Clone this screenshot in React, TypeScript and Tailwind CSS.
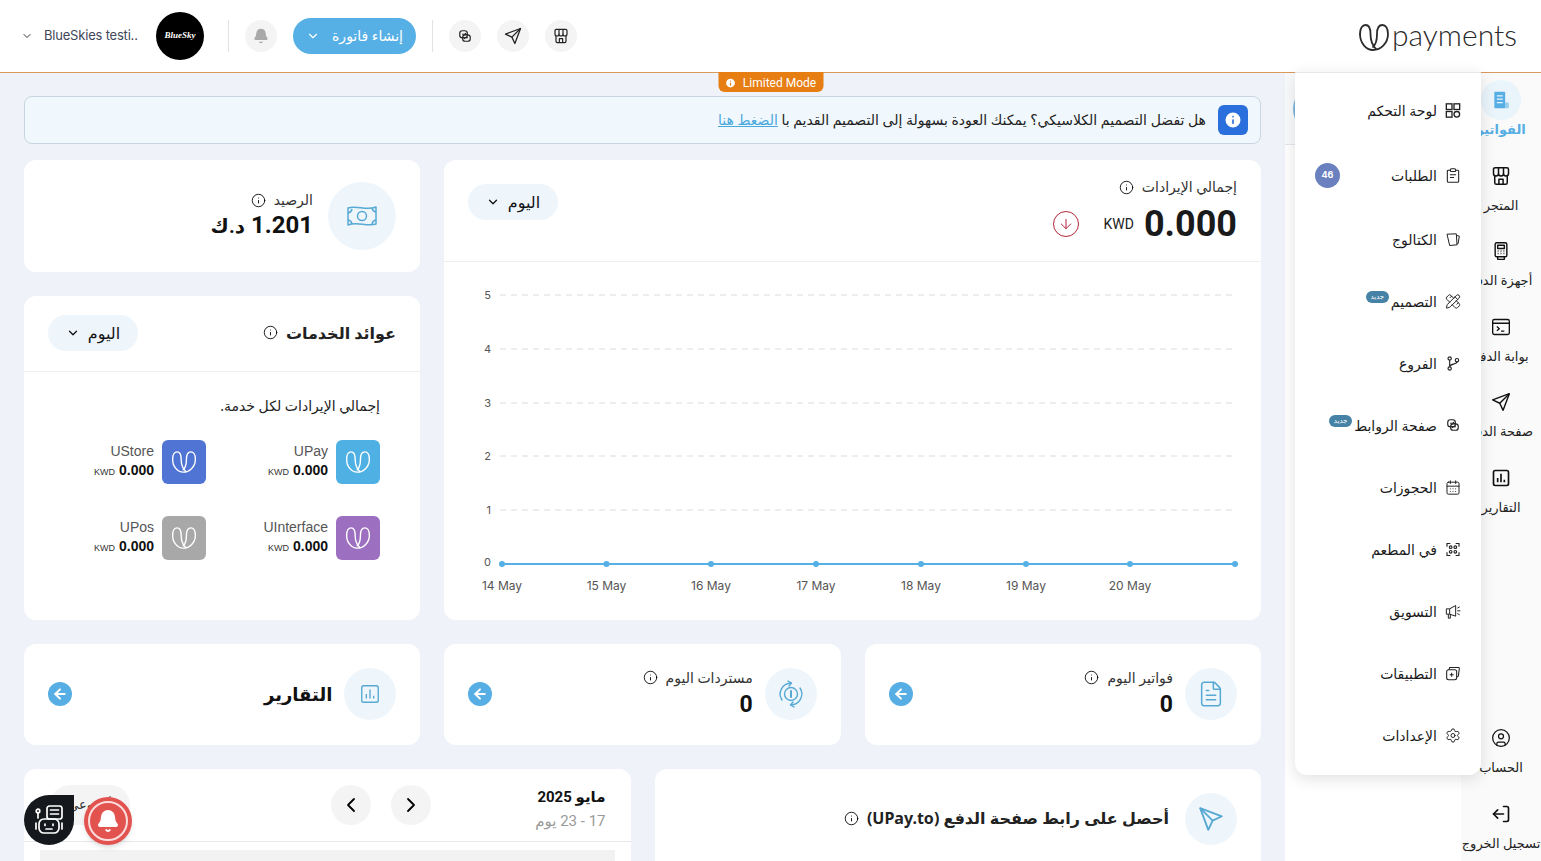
import { ReactNode } from 'react';
import {
  ArrowDown,
  ArrowLeft,
  Bell,
  CalendarDays,
  ChevronDown,
  ChevronLeft,
  ChevronRight,
  CircleUser,
  FileText,
  Info,
  LogOut,
  PencilRuler,
  Settings,
} from 'lucide-react';

function UMark({ className = '', width = 1.6 }: { className?: string; width?: number }) {
  return (
    <svg viewBox="0 0 32 29" fill="none" stroke="currentColor" strokeWidth={width} strokeLinecap="round" className={className}>
      <path d="M2 11C2 5 4.500 2 7.500 2C10.500 2 12.500 5 12.500 11C12.500 16 14 22 18 26" />
      <path d="M2 11C2 20 8 27 15 27C23 27 30 20 30 11C30 5 27.500 2 24.500 2C21 2 19 5 19 11C19 16 18.500 21 15 24" />
    </svg>
  );
}

function Plane({ className = '' }: { className?: string }) {
  return (
    <svg viewBox="0 0 24 24" fill="none" stroke="currentColor" strokeWidth={1.7} strokeLinejoin="round" className={className}>
      <path d="M2 9.500 22 2 14.500 22 10.500 13.500Z" />
      <path d="M22 2 10.500 13.500" />
    </svg>
  );
}

function StoreFront({ className = '' }: { className?: string }) {
  return (
    <svg viewBox="0 0 24 24" fill="none" stroke="currentColor" strokeWidth={1.800} strokeLinejoin="round" className={className}>
      <path d="M3 9V4a2 2 0 0 1 2-2h14a2 2 0 0 1 2 2v5a3 3 0 0 1-6 0 3 3 0 0 1-6 0 3 3 0 0 1-6 0Z" />
      <path d="M9 2v7M15 2v7" />
      <path d="M4.500 12v8a2 2 0 0 0 2 2h11a2 2 0 0 0 2-2v-8" />
      <path d="M9.500 22v-6h5v6" />
    </svg>
  );
}

function LinkSwap({ className = '' }: { className?: string }) {
  return (
    <svg viewBox="0 0 24 24" fill="none" stroke="currentColor" strokeWidth={2} className={className}>
      <rect x="3" y="3" width="13" height="12" rx="4.500" />
      <rect x="8" y="10" width="13" height="11" rx="4.500" />
      <path d="M7 9h7l-2-2M17 15h-7l2 2" strokeWidth={1.800} />
    </svg>
  );
}

function DashIcon({ className = '' }: { className?: string }) {
  return (
    <svg viewBox="0 0 24 24" fill="none" stroke="currentColor" strokeWidth={2} className={className}>
      <rect x="2" y="2" width="8.500" height="8.500" />
      <rect x="13.500" y="2" width="8.500" height="8.500" />
      <rect x="2" y="13.500" width="8.500" height="8.500" />
      <circle cx="17.750" cy="17.750" r="4.200" />
    </svg>
  );
}

function ReportIcon({ className = '', width = 2 }: { className?: string; width?: number }) {
  return (
    <svg viewBox="0 0 24 24" fill="none" stroke="currentColor" strokeWidth={width} className={className}>
      <rect x="3" y="3" width="18" height="18" rx="2" />
      <path d="M8 17v-5M12 17V7M16 17v-3" />
    </svg>
  );
}

function OrderIcon({ className = '' }: { className?: string }) {
  return (
    <svg viewBox="0 0 24 24" fill="none" stroke="currentColor" strokeWidth={1.600} strokeLinecap="round" className={className}>
      <path d="M8 4H5a1.500 1.500 0 0 0-1.500 1.500v15A1.500 1.500 0 0 0 5 22h14a1.500 1.500 0 0 0 1.500-1.500v-15A1.500 1.500 0 0 0 19 4h-3" />
      <rect x="8" y="2" width="8" height="4" rx="1.500" />
      <path d="M8 11h8M8 15h5" />
    </svg>
  );
}

function CatalogIcon({ className = '' }: { className?: string }) {
  return (
    <svg viewBox="0 0 24 24" fill="none" stroke="currentColor" strokeWidth={1.500} strokeLinejoin="round" className={className}>
      <path d="M3 4 17 3.500 18 20 7 21Z" />
      <path d="M18 6l3.500 1-2 11.500L18 18.500" />
    </svg>
  );
}

function BranchIcon({ className = '' }: { className?: string }) {
  return (
    <svg viewBox="0 0 24 24" fill="none" stroke="currentColor" strokeWidth={1.700} className={className}>
      <circle cx="7" cy="4.500" r="2.500" />
      <circle cx="7" cy="19.500" r="2.500" />
      <circle cx="18" cy="7" r="2.500" />
      <path d="M7 7v10M18 9.500C18 14 7 12 7 17" />
    </svg>
  );
}

function ScanIcon({ className = '' }: { className?: string }) {
  return (
    <svg viewBox="0 0 24 24" fill="none" stroke="currentColor" strokeWidth={1.700} className={className}>
      <path d="M3 8V3h5M16 3h5v5M21 16v5h-5M8 21H3v-5" />
      <circle cx="8.500" cy="8.500" r="2" />
      <circle cx="15.500" cy="8.500" r="2" />
      <circle cx="8.500" cy="15.500" r="2" />
      <circle cx="15.500" cy="15.500" r="2" />
    </svg>
  );
}

function HornIcon({ className = '' }: { className?: string }) {
  return (
    <svg viewBox="0 0 24 24" fill="none" stroke="currentColor" strokeWidth={1.500} strokeLinejoin="round" className={className}>
      <path d="M2 8h5l9-5v16l-9-3H2Z" />
      <path d="M7 8v8M5 16v6h3v-5.500" />
      <path d="M18.500 7 22 5M18.500 11H23M18.500 15l3.500 2" />
    </svg>
  );
}

function AppsIcon({ className = '' }: { className?: string }) {
  return (
    <svg viewBox="0 0 24 24" fill="none" stroke="currentColor" strokeWidth={1.600} strokeLinejoin="round" className={className}>
      <rect x="2.500" y="6.500" width="15" height="15" rx="3" />
      <path d="M6 6.500 7 3h13.500a1.500 1.500 0 0 1 1 1.500L20 16l-2.500 1.500" />
      <path d="M10 11v6M7 14h6" />
    </svg>
  );
}

function PosIcon({ className = '' }: { className?: string }) {
  return (
    <svg viewBox="0 0 24 24" fill="none" stroke="currentColor" strokeWidth={1.700} strokeLinejoin="round" className={className}>
      <rect x="5" y="2" width="14" height="17" rx="2" />
      <rect x="8" y="5" width="8" height="4" />
      <path d="M8 12h1M11.500 12h1M15 12h1M8 15h1M11.500 15h1M15 15h1" />
      <path d="M8 19v3h8v-3" />
    </svg>
  );
}

function GatewayIcon({ className = '' }: { className?: string }) {
  return (
    <svg viewBox="0 0 24 24" fill="none" stroke="currentColor" strokeWidth={1.600} strokeLinejoin="round" className={className}>
      <rect x="2" y="3" width="20" height="18" rx="2" />
      <path d="M2 7.500h20M7 11.500l3 2.500-3 2.500M12 17h4" />
    </svg>
  );
}

function InvoiceIcon({ className = '' }: { className?: string }) {
  return (
    <svg viewBox="0 0 24 24" fill="currentColor" className={className}>
      <path d="M4 3a1 1 0 0 1 1-1h11a1 1 0 0 1 1 1v18a1 1 0 0 1-1 1H5a1 1 0 0 1-1-1Z" />
      <path d="M17 15h3a1.500 1.500 0 0 1 1.500 1.500v3.500a2 2 0 0 1-2 2H17Z" opacity=".55" />
      <path d="M7 7h7M7 11h7M7 15h7" stroke="#eaf4fb" strokeWidth="1.500" />
    </svg>
  );
}

function MoneyIcon({ className = '' }: { className?: string }) {
  return (
    <svg viewBox="0 0 32 24" fill="none" stroke="currentColor" strokeWidth={1.500} strokeLinejoin="round" className={className}>
      <path d="M2 4C11 1 20 7 30 3V20C21 23 11 17 2 21Z" />
      <circle cx="16" cy="12" r="4.500" />
      <path d="M2 9a5 5 0 0 0 4-4M26 4a5 5 0 0 0 4 4M2 16a5 5 0 0 1 4 4M26 20a5 5 0 0 1 4-4" />
    </svg>
  );
}

function RefundIcon({ className = '' }: { className?: string }) {
  return (
    <svg viewBox="0 0 28 28" fill="none" stroke="currentColor" strokeWidth={1.400} strokeLinecap="round" strokeLinejoin="round" className={className}>
      <path d="M5 20A11 11 0 0 1 14 3" />
      <path d="M23 8A11 11 0 0 1 14 25" />
      <path d="M11 1l3.500 2L12 6M17 27l-3.500-2 2.500-3" />
      <circle cx="14" cy="14" r="6.500" />
      <path d="M14 11v6" strokeWidth={2} />
    </svg>
  );
}

function RobotIcon({ className = '' }: { className?: string }) {
  return (
    <svg viewBox="0 0 32 32" fill="none" stroke="currentColor" strokeWidth={1.700} strokeLinejoin="round" strokeLinecap="round" className={className}>
      <rect x="14" y="2" width="15" height="13" rx="2.500" />
      <path d="M17.500 6h8M17.500 10h8" />
      <rect x="6" y="15" width="20" height="14" rx="5" />
      <path d="M3 19v6M29 19v6M5 14V9" />
      <circle cx="5" cy="7" r="1.800" />
      <path d="M12 20v1.500M20 20v1.500M13 25h6" />
    </svg>
  );
}

function InfoDot({ size = 'w-[15px] h-[15px]' }: { size?: string }) {
  return <Info className={`${size} text-black shrink-0`} strokeWidth={1.400} />;
}

function Card({ children, className = '' }: { children: ReactNode; className?: string }) {
  return <div className={`bg-white rounded-xl ${className}`}>{children}</div>;
}

function DayButton() {
  return (
    <div className="w-[90px] h-9 rounded-full bg-[#eef6fc] flex items-center justify-center gap-2 text-[16px] text-[#111]">
      <span>اليوم</span>
      <ChevronDown className="w-3.5 h-3.5" strokeWidth={2.200} />
    </div>
  );
}

function IconCircle({ children, size = 'w-[52px] h-[52px]' }: { children: ReactNode; size?: string }) {
  return <div className={`${size} rounded-full bg-[#eef6fc] text-[#57a9d4] flex items-center justify-center shrink-0`}>{children}</div>;
}

function RoundButton({ children }: { children: ReactNode }) {
  return <div className="w-8 h-8 rounded-full bg-[#f4f4f4] flex items-center justify-center text-[#222] shrink-0">{children}</div>;
}

function GoArrow() {
  return (
    <div className="w-6 h-6 rounded-full bg-[#56aee4] flex items-center justify-center text-white shrink-0">
      <ArrowLeft className="w-4 h-4" strokeWidth={3} />
    </div>
  );
}

function Header() {
  return (
    <header className="h-[73px] shrink-0 bg-white border-b border-[#d99a5b] flex items-center justify-between pr-[24px] pl-[20px]">
      <div className="flex items-center gap-0.5 text-[#2b2b2b]" dir="ltr">
        <UMark className="w-[32px] h-[29px] mt-[3px]" width={1.800} />
        <span className="text-[30px] font-light leading-none font-['Lato',sans-serif] -mt-1">payments</span>
      </div>
      <div className="flex items-center">
        <RoundButton><StoreFront className="w-4 h-4" /></RoundButton>
        <div className="w-4" />
        <RoundButton><Plane className="w-[18px] h-[18px]" /></RoundButton>
        <div className="w-4" />
        <RoundButton><LinkSwap className="w-3.5 h-3.5" /></RoundButton>
        <div className="w-px h-8 bg-[#e3e3e3] mr-4 ml-4" />
        <div className="w-[123px] h-9 rounded-full bg-[#56b0e6] text-white flex items-center justify-center gap-3 text-sm">
          <span>إنشاء فاتورة</span>
          <ChevronDown className="w-3.5 h-3.5" strokeWidth={2} />
        </div>
        <div className="w-4" />
        <RoundButton><Bell className="w-4 h-4 text-[#a9a9a9]" fill="currentColor" /></RoundButton>
        <div className="w-px h-8 bg-[#e3e3e3] mr-4 ml-6" />
        <div className="w-12 h-12 rounded-full bg-black flex items-center justify-center text-white text-[9px] font-bold italic font-['Liberation_Serif',serif]" dir="ltr">BlueSky</div>
        <div className="w-[15px]" />
        <span className="w-[97px] text-[13px] tracking-[-0.2px] text-[#3f4758] font-['Inter',sans-serif] whitespace-nowrap" dir="ltr">BlueSkies testi..</span>
        <ChevronDown className="w-3 h-3 mr-[11px] ml-[1px] text-[#333]" strokeWidth={2} />
      </div>
    </header>
  );
}

const railTop = [
  { label: 'الفواتير', icon: <InvoiceIcon className="w-5 h-5" />, active: true },
  { label: 'المتجر', icon: <StoreFront className="w-5 h-5" /> },
  { label: 'أجهزة الدفع', icon: <PosIcon className="w-5 h-5" /> },
  { label: 'بوابة الدفع', icon: <GatewayIcon className="w-5 h-5" /> },
  { label: 'صفحة الدفع', icon: <Plane className="w-5 h-5" /> },
  { label: 'التقارير', icon: <ReportIcon className="w-5 h-5" /> },
];

function RailItem({ label, icon, active }: { label: string; icon: ReactNode; active?: boolean }) {
  return (
    <div className="h-[75.500px] flex flex-col items-center justify-start">
      <div className={`w-10 h-10 rounded-full flex items-center justify-center ${active ? 'bg-[#eaf4fb] text-[#56aee4]' : 'text-[#111]'}`}>{icon}</div>
      <span className={`text-[13px] whitespace-nowrap ${active ? 'text-[#56aee4] font-bold' : 'text-[#222]'}`}>{label}</span>
    </div>
  );
}

function Sidebar() {
  return (
    <aside className="w-[256px] shrink-0 bg-white flex h-full">
      <div className="w-[80px] shrink-0 bg-[#fafafa] pt-[7px] flex flex-col justify-between items-center">
        <div className="flex flex-col">
          {railTop.map((item) => (
            <RailItem key={item.label} {...item} />
          ))}
        </div>
        <div className="flex flex-col -mb-[8px]">
          <RailItem label="الحساب" icon={<CircleUser className="w-5 h-5" strokeWidth={1.500} />} />
          <RailItem label="تسجيل الخروج" icon={<LogOut className="w-5 h-5 -scale-x-100" strokeWidth={2} />} />
        </div>
      </div>
      <div className="flex-1 relative">
        <div className="h-[72px] border-b border-[#e4e8ee] bg-[#f8fafc]" />
        <div className="w-[50px] h-[50px] rounded-full bg-[#79b6da] absolute left-[8px] top-[11px]" />
      </div>
    </aside>
  );
}

type MenuRow = { label: string; icon: ReactNode; badge?: string; tag?: boolean; gap?: string };

const menu: MenuRow[] = [
  { label: 'لوحة التحكم', icon: <DashIcon className="w-[17px] h-[17px]" /> },
  { label: 'الطلبات', icon: <OrderIcon className="w-[19px] h-[19px]" />, badge: '46', gap: 'mt-[3px]' },
  { label: 'الكتالوج', icon: <CatalogIcon className="w-[19px] h-[19px]" />, gap: 'mt-[2px]' },
  { label: 'التصميم', icon: <PencilRuler className="w-[17px] h-[17px]" strokeWidth={1.500} />, tag: true },
  { label: 'الفروع', icon: <BranchIcon className="w-[17px] h-[17px]" /> },
  { label: 'صفحة الروابط', icon: <LinkSwap className="w-3.5 h-3.5" />, tag: true },
  { label: 'الحجوزات', icon: <CalendarDays className="w-[17px] h-[17px]" strokeWidth={1.500} /> },
  { label: 'في المطعم', icon: <ScanIcon className="w-[17px] h-[17px]" /> },
  { label: 'التسويق', icon: <HornIcon className="w-[17px] h-[17px]" /> },
  { label: 'التطبيقات', icon: <AppsIcon className="w-[17px] h-[17px]" /> },
  { label: 'الإعدادات', icon: <Settings className="w-[17px] h-[17px]" strokeWidth={1.500} /> },
];

function FlyoutMenu() {
  return (
    <div className="absolute top-[72px] right-[60px] w-[186px] h-[703px] bg-white rounded-b-xl shadow-[0_4px_16px_rgba(0,0,0,0.12)] border-t border-[#e6e6e6] pt-[6px] pr-[20px] pl-[20px]">
      {menu.map((row) => (
        <div key={row.label} className={`h-[62px] flex items-center gap-2 text-[14px] text-[#1a1a1a] ${row.gap ?? ''}`}>
          <span className="w-4 flex justify-center shrink-0 text-[#222]">{row.icon}</span>
          <span className="whitespace-nowrap">{row.label}</span>
          {row.tag && <span className="w-[23px] h-[12px] rounded-full bg-[#4582a6] text-white text-[7px] leading-[12px] text-center -mt-2 -mr-1.5 shrink-0">جديد</span>}
          {row.badge && <span className="mr-auto w-[25px] h-[25px] rounded-full bg-[#6a80bf] text-white text-[9px] font-bold flex items-center justify-center font-['Inter',sans-serif]">{row.badge}</span>}
        </div>
      ))}
    </div>
  );
}

function RevenueChart() {
  const ys = [
    { y: 33, v: '5' },
    { y: 87, v: '4' },
    { y: 141, v: '3' },
    { y: 194, v: '2' },
    { y: 248, v: '1' },
  ];
  const xs = [58, 162.500, 267, 372, 477, 582, 686, 791];
  const days = ['14 May', '15 May', '16 May', '17 May', '18 May', '19 May', '20 May'];
  return (
    <div dir="ltr">
      <svg viewBox="0 0 817 358" className="w-full h-[358px] font-['Inter',sans-serif]">
        {ys.map((g) => (
          <g key={g.v}>
            <line x1="56" x2="792" y1={g.y} y2={g.y} stroke="#dcdcdc" strokeDasharray="6 5" />
            <text x="47" y={g.y + 4} textAnchor="end" fontSize="11" fill="#555">{g.v}</text>
          </g>
        ))}
        <text x="47" y="304" textAnchor="end" fontSize="11" fill="#555">0</text>
        <line x1="58" x2="791" y1="302" y2="302" stroke="#56b0e6" strokeWidth="2" />
        {xs.map((x) => (
          <circle key={x} cx={x} cy="302" r="3" fill="#56b0e6" />
        ))}
        {days.map((d, i) => (
          <text key={d} x={xs[i]} y="328" textAnchor="middle" fontSize="12" fill="#555">{d}</text>
        ))}
      </svg>
    </div>
  );
}

const services = [
  { name: 'UPay', tile: 'bg-[#4fb1e3]' },
  { name: 'UStore', tile: 'bg-[#4f74d4]' },
  { name: 'UInterface', tile: 'bg-[#9c6fc0]' },
  { name: 'UPos', tile: 'bg-[#a8a8a8]' },
];

function ServiceCard() {
  return (
    <Card className="flex-1">
      <div className="h-[76px] pb-[2px] border-b border-[#eceef1] flex items-center justify-between px-6">
        <div className="flex items-center gap-2">
          <span className="text-[16px] font-bold text-[#222]">عوائد الخدمات</span>
          <InfoDot />
        </div>
        <DayButton />
      </div>
      <div className="pt-[24px] pr-10">
        <p className="text-[14px] text-[#222] leading-5">إجمالي الإيرادات لكل خدمة.</p>
        <div className="grid grid-cols-[174px_174px] gap-y-8 mt-6">
          {services.map((s) => (
            <div key={s.name} className="flex items-center gap-2">
              <div className={`${s.tile} w-11 h-11 rounded-md text-white flex items-center justify-center shrink-0`}>
                <UMark className="w-[26px] h-[24px]" width={1.700} />
              </div>
              <div className="font-['Liberation_Sans',sans-serif]">
                <div className="text-[14px] text-[#555] leading-[18px]">{s.name}</div>
                <div className="flex items-baseline gap-1 leading-5">
                  <span className="text-[14px] font-bold text-[#111]">0.000</span>
                  <span className="text-[9px] text-[#333]">KWD</span>
                </div>
              </div>
            </div>
          ))}
        </div>
      </div>
    </Card>
  );
}

function StatCard({ icon, title, value }: { icon: ReactNode; title: string; value: string }) {
  return (
    <Card className="h-[101px] pb-[1px] flex items-center justify-between px-6">
      <div className="flex items-center gap-3">
        <IconCircle>{icon}</IconCircle>
        <div className="-mt-[2px]">
          <div className="flex items-center gap-2 text-[14px] text-[#333] leading-5">
            <span>{title}</span>
            <InfoDot />
          </div>
          <div className="text-[23px] font-bold text-[#111] leading-7 mt-[3px] font-['Roboto',sans-serif]">{value}</div>
        </div>
      </div>
      <GoArrow />
    </Card>
  );
}

function Main() {
  return (
    <main className="flex-1 min-w-0 h-full bg-[#eff3f9] overflow-hidden px-6 pt-[23px]">
      <div className="h-12 pb-[2px] rounded-lg border border-[#c8d5e0] bg-[#f1f8fd] flex items-center pr-[12px] gap-3 text-[14px] text-[#222]">
        <div className="w-[30px] h-[30px] mt-[2px] rounded-md bg-[#2a6fdb] flex items-center justify-center text-white">
          <Info className="w-5 h-5" fill="#fff" stroke="#2a6fdb" strokeWidth={2} />
        </div>
        <span>
          هل تفضل التصميم الكلاسيكي؟ يمكنك العودة بسهولة إلى التصميم القديم با <span className="text-[#4aa8dc] underline">الضغط هنا</span>
        </span>
      </div>

      <div className="grid grid-cols-[1fr_396px] gap-6 mt-4 h-[460px]">
        <Card className="flex flex-col">
          <div className="h-[102px] shrink-0 border-b border-[#eceef1] flex items-center justify-between px-6">
            <div>
              <div className="flex items-center gap-2 text-[14px] text-[#333] leading-5">
                <span>إجمالي الإيرادات</span>
                <InfoDot />
              </div>
              <div className="flex items-center mt-[7px] font-['Roboto',sans-serif]">
                <span className="text-[36px] font-bold text-[#1a1a1a] leading-10">0.000</span>
                <span className="text-[14px] text-[#222] mr-[10px]">KWD</span>
                <div className="w-[26px] h-[26px] rounded-full border-[1.500px] border-[#b3263c] text-[#b3263c] flex items-center justify-center mr-[25px]">
                  <ArrowDown className="w-4 h-4" strokeWidth={1.500} />
                </div>
              </div>
            </div>
            <div className="-mt-[18px]"><DayButton /></div>
          </div>
          <RevenueChart />
        </Card>

        <div className="flex flex-col gap-6">
          <Card className="h-[112px] flex items-center gap-[15px] pr-6 shrink-0">
            <IconCircle size="w-[68px] h-[68px]"><MoneyIcon className="w-8 h-6" /></IconCircle>
            <div>
              <div className="flex items-center gap-2 text-[14px] text-[#333] leading-5">
                <span>الرصيد</span>
                <InfoDot />
              </div>
              <div className="text-[24px] font-bold text-[#111] leading-8 -mt-[1px] font-['Roboto','DejaVu_Sans',sans-serif]">
                1.201 <span className="text-[20px]">د.ك</span>
              </div>
            </div>
          </Card>
          <ServiceCard />
        </div>
      </div>

      <div className="grid grid-cols-3 gap-6 mt-6">
        <StatCard icon={<FileText className="w-7 h-7" strokeWidth={1.300} />} title="فواتير اليوم" value="0" />
        <StatCard icon={<RefundIcon className="w-7 h-7" />} title="مستردات اليوم" value="0" />
        <Card className="h-[101px] pb-[1px] flex items-center justify-between px-6">
          <div className="flex items-center gap-3">
            <IconCircle><ReportIcon className="w-[22px] h-[22px]" width={1.500} /></IconCircle>
            <span className="text-[18px] font-bold text-[#111]">التقارير</span>
          </div>
          <GoArrow />
        </Card>
      </div>

      <div className="grid grid-cols-2 gap-6 mt-6">
        <Card className="h-[200px] px-6 pt-6 flex items-start gap-4">
          <IconCircle><Plane className="w-[26px] h-[26px] -scale-x-100" /></IconCircle>
          <div className="flex items-center gap-2 mt-[13px]">
            <span className="text-[16px] font-bold text-[#222]">أحصل على رابط صفحة الدفع (UPay.to)</span>
            <InfoDot />
          </div>
        </Card>
        <Card className="h-[200px]">
          <div className="h-[73px] border-b border-[#e6e8eb] flex items-center pr-[25px] pl-[26px]">
            <div className="flex-1 pt-[5px]">
              <div className="text-[15px] font-bold text-[#111] leading-6 font-['Roboto','DejaVu_Sans',sans-serif]">مايو 2025</div>
              <div className="text-[15px] text-[#9a9a9a] leading-5 mt-[2px] font-['Roboto','DejaVu_Sans',sans-serif]">17 - 23 يوم</div>
            </div>
            <div className="flex gap-5 ml-[201px]">
              <div className="w-10 h-10 rounded-full bg-[#f4f4f4] flex items-center justify-center"><ChevronRight className="w-6 h-6" strokeWidth={1.800} /></div>
              <div className="w-10 h-10 rounded-full bg-[#f4f4f4] flex items-center justify-center"><ChevronLeft className="w-6 h-6" strokeWidth={1.800} /></div>
            </div>
            <div className="w-20 h-10 rounded-full bg-[#f4f4f4] flex items-center justify-center text-[13px] text-[#333]">أسبوعي</div>
          </div>
          <div className="h-8 mx-4 mt-2 bg-[#f2f2f2]" />
        </Card>
      </div>
    </main>
  );
}

export default function App() {
  return (
    <div dir="rtl" className="relative h-[861px] w-[1541px] overflow-hidden flex flex-col bg-[#eff3f9] font-['Noto_Sans','DejaVu_Sans',sans-serif]">
      <Header />
      <div className="flex-1 flex min-h-0">
        <Sidebar />
        <Main />
      </div>

      <div className="absolute top-[72px] left-1/2 -translate-x-1/2 h-5 w-[105px] pt-[1px] rounded-b-md bg-[#e67e14] text-white text-[12px] flex items-center justify-center gap-1.5 font-['Roboto',sans-serif]" dir="ltr">
        <Info className="w-3 h-3" fill="#fff" stroke="#e67e14" strokeWidth={2.500} />
        Limited Mode
      </div>

      <FlyoutMenu />

      <div className="absolute left-[24px] top-[795px] w-[50px] h-[50px] rounded-full rounded-tr-[12px] bg-[#15181c] text-white flex items-center justify-center">
        <RobotIcon className="w-8 h-8" />
      </div>
      <div className="absolute left-[84px] top-[797px] w-12 h-12 rounded-full bg-[#e2534f] shadow-md flex items-center justify-center">
        <div className="w-10 h-10 rounded-full border-2 border-white/80 flex items-center justify-center text-white">
          <Bell className="w-6 h-6" fill="currentColor" />
        </div>
      </div>
    </div>
  );
}
